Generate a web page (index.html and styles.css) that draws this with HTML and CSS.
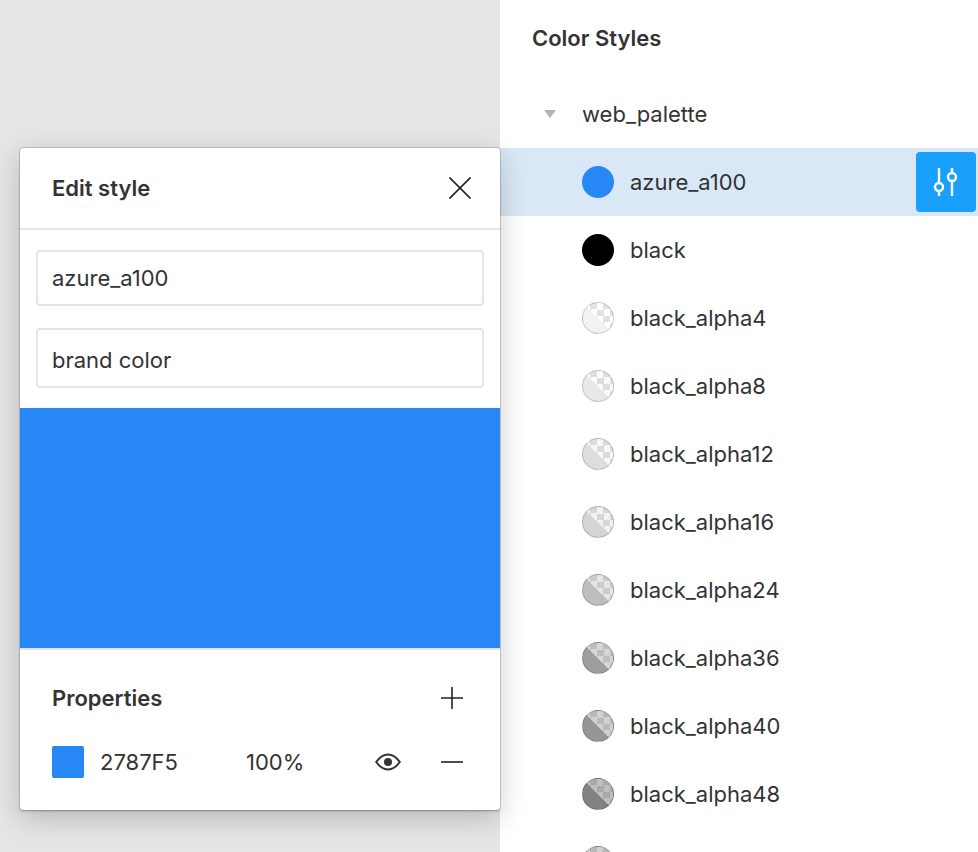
FILE: index.html
```html
<!DOCTYPE html>
<html lang="en">
<head>
    <meta charset="UTF-8">
    <meta name="viewport" content="width=device-width, initial-scale=1.0">
    <title>Color Styles</title>
    <link rel="stylesheet" href="styles.css">
</head>
<body>
    <div class="canvas">
        <section class="editor">
            <header class="editor-head">
                <h2 class="editor-title">Edit style</h2>
                <svg class="icon" viewBox="0 0 22 22"><path d="M0.5 0.5 L21.5 21.5 M21.5 0.5 L0.5 21.5"/></svg>
            </header>
            <div class="editor-fields">
                <input class="field" type="text" value="azure_a100">
                <input class="field field-tall" type="text" value="brand color">
            </div>
            <div class="preview"></div>
            <div class="props">
                <div class="props-head">
                    <h2 class="editor-title">Properties</h2>
                    <svg class="icon" viewBox="0 0 22 22"><path d="M11 0 V22 M0 11 H22"/></svg>
                </div>
                <div class="prop-row">
                    <span class="prop-chip"></span>
                    <span class="prop-hex">2787F5</span>
                    <span class="prop-opacity">100%</span>
                    <svg class="eye" viewBox="0 0 26 18"><path d="M1.2 9 C5 3.6 9 1.5 13 1.5 C17 1.5 21 3.6 24.8 9 C21 14.4 17 16.5 13 16.5 C9 16.5 5 14.4 1.2 9 Z"/><circle cx="13" cy="9" r="4"/></svg>
                    <svg class="icon" viewBox="0 0 22 22"><path d="M0 11 H22"/></svg>
                </div>
            </div>
        </section>
    </div>

    <aside class="styles">
        <h1 class="styles-title">Color Styles</h1>
        <div class="group">
            <span class="caret"></span>
            <span>web_palette</span>
        </div>
        <ul class="style-list">
            <li class="style-row selected">
                <span class="swatch azure"></span>
                <span>azure_a100</span>
                <button class="tune" type="button">
                    <svg viewBox="0 0 28 32"><path d="M7 0 V15 M7 23 V28 M20 0 V5 M20 13 V28"/><circle cx="7" cy="19" r="4"/><circle cx="20" cy="9" r="4"/></svg>
                </button>
            </li>
            <li class="style-row"><span class="swatch black"></span><span>black</span></li>
            <li class="style-row"><span class="swatch alpha a4"></span><span>black_alpha4</span></li>
            <li class="style-row"><span class="swatch alpha a8"></span><span>black_alpha8</span></li>
            <li class="style-row"><span class="swatch alpha a12"></span><span>black_alpha12</span></li>
            <li class="style-row"><span class="swatch alpha a16"></span><span>black_alpha16</span></li>
            <li class="style-row"><span class="swatch alpha a24"></span><span>black_alpha24</span></li>
            <li class="style-row"><span class="swatch alpha a36"></span><span>black_alpha36</span></li>
            <li class="style-row"><span class="swatch alpha a40"></span><span>black_alpha40</span></li>
            <li class="style-row"><span class="swatch alpha a48"></span><span>black_alpha48</span></li>
            <li class="style-row"><span class="swatch alpha a40"></span></li>
        </ul>
    </aside>
</body>
</html>
```

FILE: styles.css
```css
* {
    box-sizing: border-box;
}
html, body {
    height: 852px;
    margin: 0;
    overflow: hidden;
}
body {
    display: flex;
    font-family: Inter, "Liberation Sans", sans-serif;
    font-size: 22px;
    color: #333;
    background-color: #e5e5e5;
}
h1, h2 {
    margin: 0;
    font-size: 22px;
    font-weight: 600;
}

/* left side, floating editor */
.canvas {
    flex: 0 0 500px;
    padding: 148px 0 0 20px;
    position: relative;
    z-index: 1;
}
.editor {
    width: 480px;
    height: 662px;
    background-color: #fff;
    border-radius: 3px;
    box-shadow: 0 0 0 0.5px rgba(0, 0, 0, 0.3), 0 2px 2px rgba(0, 0, 0, 0.12), 0 8px 28px rgba(0, 0, 0, 0.2);
    overflow: hidden;
}
.editor-head {
    height: 82px;
    padding: 0 29px 0 32px;
    display: flex;
    align-items: center;
    justify-content: space-between;
    border-bottom: 2px solid #e5e5e5;
}
.icon {
    flex: none;
    width: 22px;
    height: 22px;
    fill: none;
    stroke: #222;
    stroke-width: 1.6;
}
.editor-fields {
    padding: 20px 16px;
    display: flex;
    flex-direction: column;
    gap: 22px;
}
.field {
    width: 100%;
    height: 56px;
    padding: 0 14px;
    border: 2px solid #e5e5e5;
    border-radius: 4px;
    font: inherit;
    color: #333;
    background-color: #fff;
}
.field-tall {
    height: 60px;
    padding-top: 4px;
}
.preview {
    height: 242px;
    background-color: #2787f5;
    border-bottom: 2px solid #e5e5e5;
}
.props {
    padding: 36px 37px 0 32px;
}
.props-head {
    height: 24px;
    display: flex;
    align-items: center;
    justify-content: space-between;
}
.prop-row {
    margin-top: 36px;
    height: 32px;
    display: flex;
    align-items: center;
}
.prop-chip {
    width: 32px;
    height: 32px;
    border-radius: 2px;
    background-color: #2787f5;
}
.prop-hex {
    margin-left: 16px;
    width: 146px;
}
.prop-opacity {
    width: 129px;
}
.eye {
    flex: none;
    width: 26px;
    height: 18px;
    margin-right: 40px;
    fill: none;
    stroke: #333;
    stroke-width: 2;
}
.eye circle {
    fill: #333;
    stroke: none;
}

/* right side, style list */
.styles {
    flex: 1;
    background-color: #fff;
}
.styles-title {
    height: 80px;
    padding: 24px 0 0 32px;
    line-height: 28px;
}
.group {
    height: 68px;
    display: flex;
    align-items: center;
    padding-left: 44px;
}
.caret {
    width: 0;
    height: 0;
    margin-right: 26px;
    border-left: 6px solid transparent;
    border-right: 6px solid transparent;
    border-top: 8px solid #b3b3b3;
}
.style-list {
    list-style: none;
    margin: 0;
    padding: 0;
}
.style-row {
    height: 68px;
    padding-left: 82px;
    display: flex;
    align-items: center;
    gap: 16px;
}
.style-row.selected {
    background-color: #d9e8f6;
}
.tune {
    margin-left: auto;
    margin-right: 2px;
    width: 60px;
    height: 60px;
    padding: 0;
    border: none;
    border-radius: 4px;
    background-color: #18a0fb;
    display: flex;
    align-items: center;
    justify-content: center;
}
.tune svg {
    width: 28px;
    height: 32px;
    margin-top: 4px;
    fill: none;
    stroke: #fff;
    stroke-width: 2.4;
}
.swatch {
    flex: none;
    width: 32px;
    height: 32px;
    border-radius: 50%;
}
.azure {
    background-color: #2787f5;
}
.black {
    background-color: #000;
}
.alpha {
    border: 1px solid rgba(0, 0, 0, 0.16);
    background:
        linear-gradient(to top right, rgba(0, 0, 0, var(--low)) 50%, rgba(0, 0, 0, var(--high)) 50%),
        linear-gradient(to top right, #fff 50%, transparent 50%),
        conic-gradient(#e2e2e2 25%, #fff 0 50%, #e2e2e2 0 75%, #fff 0) 1px 0 / 13px 13px;
}
.a4 { --low: 0.05; --high: 0; }
.a8 { --low: 0.09; --high: 0.02; }
.a12 { --low: 0.13; --high: 0.03; }
.a16 { --low: 0.17; --high: 0.05; }
.a24 { --low: 0.26; --high: 0.1; }
.a36 { --low: 0.38; --high: 0.16; }
.a40 { --low: 0.41; --high: 0.18; }
.a48 { --low: 0.49; --high: 0.25; }
```
